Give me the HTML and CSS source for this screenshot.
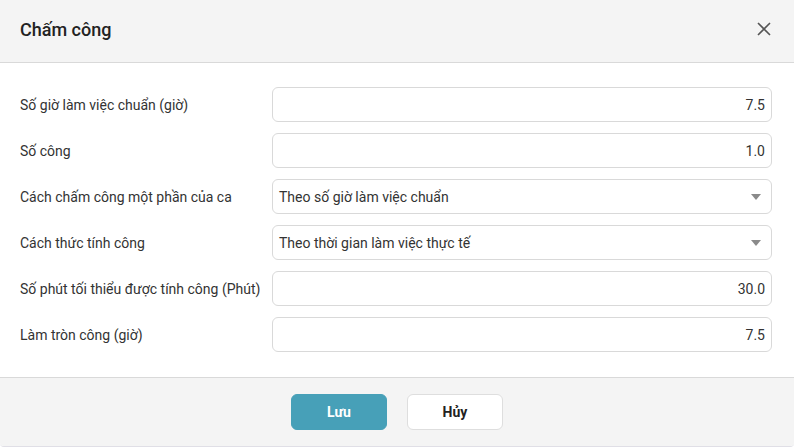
FILE: index.html
```html
<!DOCTYPE html>
<html lang="vi">
<head>
<meta charset="utf-8">
<link rel="stylesheet" href="styles.css">
</head>
<body>
<div class="dialog">
  <div class="header">
    <div class="title">Chấm công</div>
    <svg class="close" width="14" height="14" viewBox="0 0 14 14"><path d="M1 1L13 13M13 1L1 13" stroke="#555" stroke-width="1.6" fill="none"/></svg>
  </div>
  <div class="content">
    <div class="row"><div class="label">Số giờ làm việc chuẩn (giờ)</div><div class="field num">7.5</div></div>
    <div class="row"><div class="label">Số công</div><div class="field num">1.0</div></div>
    <div class="row"><div class="label">Cách chấm công một phần của ca</div><div class="field select"><span>Theo số giờ làm việc chuẩn</span><span class="arrow"></span></div></div>
    <div class="row"><div class="label">Cách thức tính công</div><div class="field select"><span>Theo thời gian làm việc thực tế</span><span class="arrow"></span></div></div>
    <div class="row"><div class="label">Số phút tối thiểu được tính công (Phút)</div><div class="field num">30.0</div></div>
    <div class="row"><div class="label">Làm tròn công (giờ)</div><div class="field num">7.5</div></div>
  </div>
  <div class="footer">
    <button class="btn primary">Lưu</button>
    <button class="btn secondary">Hủy</button>
  </div>
</div>
</body>
</html>
```
FILE: styles.css
```css
html, body { margin: 0; padding: 0; background: #ffffff; }
body { font-family: Roboto, "Liberation Sans", Arial, sans-serif; color: #333; }
.dialog { width: 794px; height: 447px; display: flex; flex-direction: column; border-radius: 0 0 4px 4px; overflow: hidden; border-bottom: 1px solid #e0dfe6; box-sizing: border-box; }
.header { height: 62px; background: #f4f4f4; border-bottom: 1px solid #d9d9d9; display: flex; align-items: center; justify-content: space-between; padding: 0 23px 0 20px; box-sizing: content-box; }
.title { font-size: 18px; font-weight: 500; color: #222; margin-top: -4px; }
.close { margin-top: -4px; }
.content { background: #fff; padding: 24px 22px 25px 20px; display: flex; flex-direction: column; gap: 11px; }
.row { display: flex; align-items: center; height: 35px; }
.label { width: 252px; flex: none; font-size: 14px; color: #333; }
.field { flex: 1; height: 35px; box-sizing: border-box; border: 1px solid #d9d9d9; border-radius: 6px; font-size: 14px; color: #333; display: flex; align-items: center; padding: 0 6px; }
.num { justify-content: flex-end; }
.select { justify-content: space-between; padding-right: 10px; }
.arrow { width: 0; height: 0; border-left: 5px solid transparent; border-right: 5px solid transparent; border-top: 6px solid #8a8a8a; }
.footer { flex: 1; background: #f4f4f4; border-top: 1px solid #d9d9d9; display: flex; justify-content: center; align-items: flex-start; padding-top: 16px; gap: 20px; }
.btn { width: 96px; height: 36px; border-radius: 6px; font-family: Roboto, "Liberation Sans", Arial, sans-serif; font-size: 14px; font-weight: 700; cursor: pointer; }
.primary { background: #47a0b8; color: #fff; border: 1px solid #47a0b8; }
.secondary { background: #fff; color: #222; border: 1px solid #dedede; }
```
